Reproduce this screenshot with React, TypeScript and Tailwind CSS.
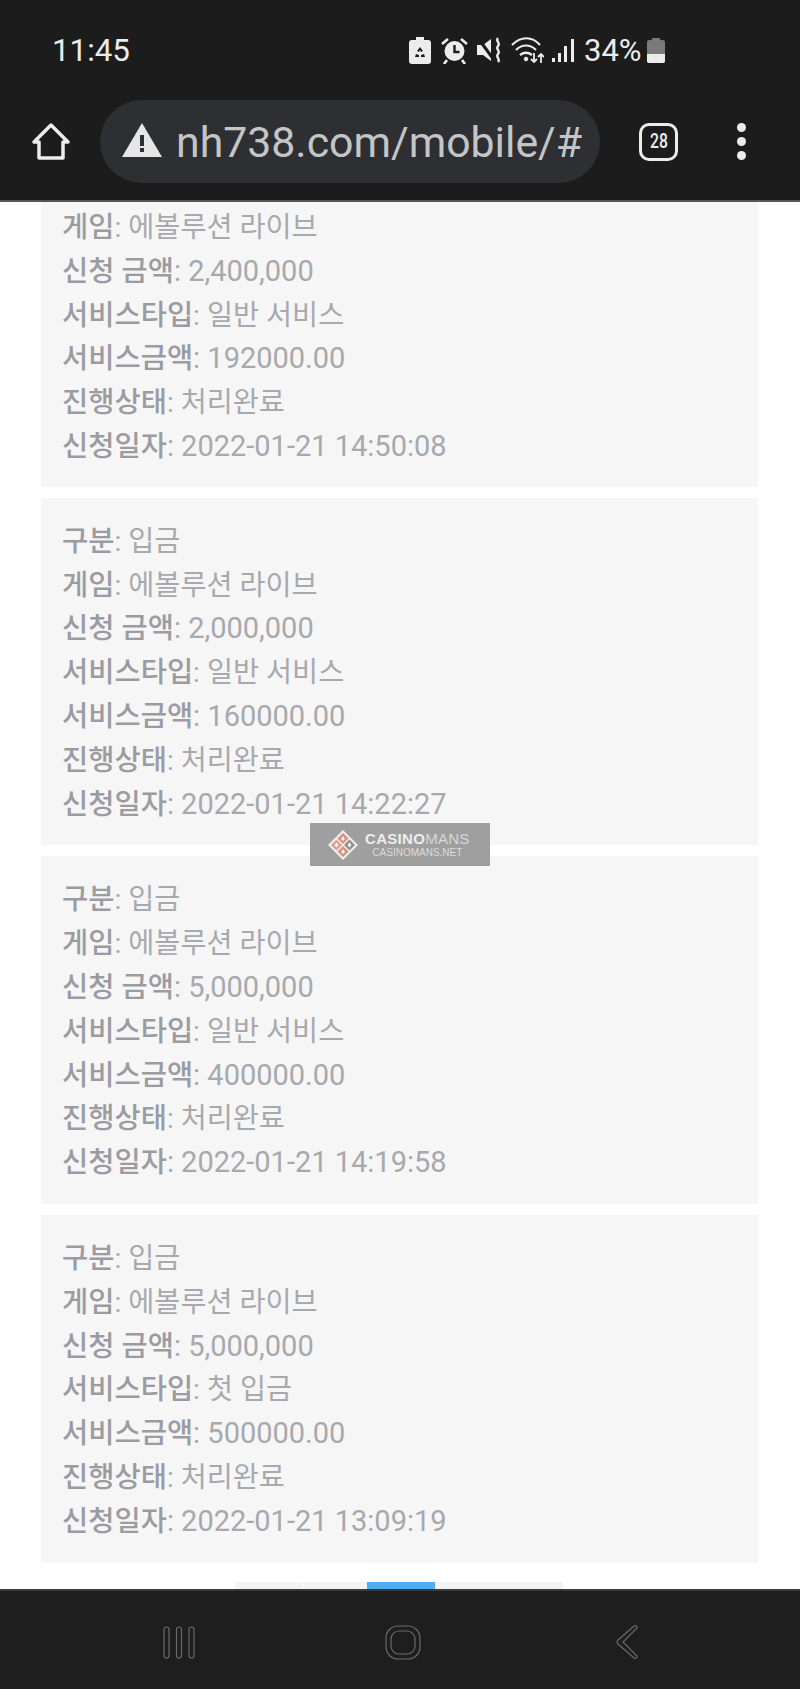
import React from "react";

const cards = [
  { game: "에볼루션 라이브", amount: "2,400,000", type: "일반 서비스", bonus: "192000.00", date: "2022-01-21 14:50:08", clipped: true },
  { game: "에볼루션 라이브", amount: "2,000,000", type: "일반 서비스", bonus: "160000.00", date: "2022-01-21 14:22:27" },
  { game: "에볼루션 라이브", amount: "5,000,000", type: "일반 서비스", bonus: "400000.00", date: "2022-01-21 14:19:58" },
  { game: "에볼루션 라이브", amount: "5,000,000", type: "첫 입금", bonus: "500000.00", date: "2022-01-21 13:09:19" },
];

function Row({ label, value, num }: { label: string; value: string; num?: boolean }) {
  return (
    <div className="h-[43.8px] leading-[43.8px] whitespace-nowrap">
      <span className="font-medium text-[#9a9ca1]">{label}</span>
      <span className={`text-[#a8a9ad] ${num ? "text-[29px]" : "text-[28.3px]"}`}>: {value}</span>
    </div>
  );
}

function StatusIcons() {
  return (
    <div className="flex items-center text-[#ececec]">
      <svg width="22" height="27" viewBox="0 0 22 27" className="ml-[409px]">
        <path d="M7 0h8v3h4a3 3 0 0 1 3 3v18a3 3 0 0 1-3 3H3a3 3 0 0 1-3-3V6a3 3 0 0 1 3-3h4z" fill="currentColor" />
        <path d="M11 10l3 4-2 1-1-2-1 2-2-1zM7 17l-1 3h4v-2zM15 17l1 3h-4v-2z" fill="#1c1c1c" />
      </svg>
      <svg width="29" height="27" viewBox="0 0 29 27" className="ml-[9px]" fill="none">
        <circle cx="14.5" cy="14" r="10" fill="currentColor" />
        <path d="M14.5 8v7h5" stroke="#1c1c1c" strokeWidth="2.4" />
        <path d="M2 7l6-5M27 7l-6-5M7 23l-3 4M22 23l3 4" stroke="currentColor" strokeWidth="2.6" />
      </svg>
      <svg width="27" height="26" viewBox="0 0 27 26" className="ml-[7px]" fill="none">
        <path d="M1 8h6l8-6v22l-8-6H1z" fill="currentColor" />
        <path d="M2 1l16 22" stroke="#1c1c1c" strokeWidth="3" />
        <path d="M22 1c-3 3 3 5 0 8s3 5 0 8 3 5 0 8" stroke="currentColor" strokeWidth="2.4" />
      </svg>
      <svg width="33" height="27" viewBox="0 0 33 27" className="ml-[8px]" fill="none" stroke="currentColor">
        <path d="M1 8c9-9 20-9 28 0" strokeWidth="2.2" />
        <path d="M5 13c6-6 14-6 20 0" strokeWidth="2.2" />
        <path d="M9 18c4-3 8-3 12 0" strokeWidth="2.2" />
        <circle cx="15" cy="22" r="1.8" fill="currentColor" />
        <path d="M23 16v9M20 22l3 3 3-3M30 26v-9M27 20l3-3 3 3" strokeWidth="1.8" />
      </svg>
      <svg width="22" height="25" viewBox="0 0 22 25" className="ml-[8px]" fill="currentColor">
        <rect x="0" y="20" width="3" height="4" />
        <rect x="6" y="15" width="3" height="9" />
        <rect x="12" y="8" width="3" height="16" />
        <rect x="19" y="1" width="3" height="23" />
      </svg>
      <span className="ml-[10px] w-[58px] text-[31px] leading-none whitespace-nowrap">34%</span>
      <svg width="18" height="25" viewBox="0 0 18 25" className="ml-[5px]">
        <path d="M5 0h8v2h3a2 2 0 0 1 2 2v19a2 2 0 0 1-2 2H2a2 2 0 0 1-2-2V4a2 2 0 0 1 2-2h3z" fill="#7a7a7a" />
        <path d="M0 16h18v7a2 2 0 0 1-2 2H2a2 2 0 0 1-2-2z" fill="#ececec" />
      </svg>
    </div>
  );
}

export default function App() {
  return (
    <div className="relative h-[1689px] w-[800px] flex flex-col overflow-hidden bg-white font-['Roboto','Noto_Sans_CJK_KR',sans-serif]">
      <header className="h-[202px] shrink-0 bg-[#1c1c1c] border-b-2 border-[#55565a]">
        <div className="h-[100px] relative flex items-center">
          <span className="absolute left-[52px] top-[34px] text-[31.3px] leading-[34px] text-[#ececec]">11:45</span>
          <StatusIcons />
        </div>
        <div className="flex items-center h-[83px]">
          <svg width="40" height="39" viewBox="0 0 40 39" className="ml-[31px] text-[#ececec]" fill="none" stroke="currentColor" strokeWidth="3.5" strokeLinejoin="round">
            <path d="M20 3L3 20h5v16h24V20h5z" />
          </svg>
          <div className="ml-[29px] w-[500px] h-[83px] rounded-full bg-[#2e2f32] flex items-center">
            <svg width="40" height="34" viewBox="0 0 40 34" className="ml-[22px] mb-[3px]">
              <path d="M20 0l20 34H0z" fill="#e6e6e6" />
              <path d="M18 12h4v11h-4zM18 25h4v4h-4z" fill="#2e2f32" />
            </svg>
            <span className="ml-[14px] mt-[2px] text-[42.8px] leading-none text-[#c4c5c7] whitespace-nowrap">nh738.com/mobile/#</span>
          </div>
          <div className="ml-[39px] w-[39px] h-[38px] rounded-[10px] border-[3.5px] border-[#ececec] flex items-center justify-center text-[#ececec]">
            <span className="text-[21px] font-medium scale-x-75">28</span>
          </div>
          <div className="ml-[59px] flex flex-col gap-[5px]">
            <span className="w-[9px] h-[9px] rounded-full bg-[#ececec]" />
            <span className="w-[9px] h-[9px] rounded-full bg-[#ececec]" />
            <span className="w-[9px] h-[9px] rounded-full bg-[#ececec]" />
          </div>
        </div>
      </header>

      <main className="flex-1 overflow-hidden px-[41px] text-[28.5px]">
        <div className="flex flex-col gap-[11px]">
          {cards.map((c) => (
            <div key={c.date} className={`w-[717px] bg-[#f6f6f7] px-[21px] ${c.clipped ? "pt-[4px] pb-[18px]" : "pt-[22px] pb-[19px]"}`}>
              {!c.clipped && <Row label="구분" value="입금" />}
              <Row label="게임" value={c.game} />
              <Row label="신청 금액" value={c.amount} num />
              <Row label="서비스타입" value={c.type} />
              <Row label="서비스금액" value={c.bonus} num />
              <Row label="진행상태" value="처리완료" />
              <Row label="신청일자" value={c.date} num />
            </div>
          ))}
        </div>
        <div className="mt-[19px] ml-[194px] flex h-[7px] w-[328px]">
          <div className="w-[67px] bg-[#f3f3f4] mr-[1px]" />
          <div className="w-[64px] bg-[#f3f3f4]" />
          <div className="w-[68px] bg-[#50aeee]" />
          <div className="flex-1 bg-[#f3f3f4]" />
        </div>
      </main>

      <nav className="h-[100px] shrink-0 bg-[#1e1e1e] border-t-2 border-[#3a3a3c] flex items-start">
        <svg width="32" height="33" viewBox="0 0 32 33" className="ml-[163px] mt-[35px]" fill="none" stroke="#6a6a6c" strokeWidth="1.2">
          <rect x="1" y="1" width="5" height="31" rx="2.5" />
          <rect x="13.5" y="1" width="5" height="31" rx="2.5" />
          <rect x="26" y="1" width="5" height="31" rx="2.5" />
        </svg>
        <svg width="36" height="35" viewBox="0 0 36 35" className="ml-[190px] mt-[34px]" fill="none" stroke="#6a6a6c" strokeWidth="1.2">
          <rect x="1" y="1" width="34" height="33" rx="12" />
          <rect x="6" y="6" width="24" height="23" rx="8" />
        </svg>
        <svg width="22" height="34" viewBox="0 0 22 34" className="ml-[195px] mt-[34px]" fill="none" stroke="#6a6a6c" strokeWidth="1.2">
          <path d="M18 1a2 2 0 0 1 3 2L7 17l14 14a2 2 0 0 1-3 2L2 19a3 3 0 0 1 0-4z" />
        </svg>
      </nav>

      {/* watermark */}
      <div className="absolute left-[310px] top-[823px] w-[180px] h-[43px] bg-[#9f9f9f] flex items-center">
        <svg width="32" height="32" viewBox="0 0 32 32" className="ml-[17px]">
          <path d="M16 1l15 15-15 15L1 16z" fill="#eeeeee" />
          <path d="M16 4l5.5 5.5L16 15l-5.5-5.5z" fill="#d98f7c" />
          <path d="M28 16l-5.5 5.5L17 16l5.5-5.5z" fill="#8f8f8f" />
          <path d="M16 28l-5.5-5.5L16 17l5.5 5.5z" fill="#d98f7c" />
          <path d="M4 16l5.5-5.5L15 16l-5.5 5.5z" fill="#d9a090" />
          <path d="M16 7l2 3-2 2-2-2zM16 20l2 3-2 2-2-2zM9.5 13.5l2 2.5-2 2.5-2-2.5zM22.5 13.5l2 2.5-2 2.5-2-2.5z" fill="#f4f4f4" />
        </svg>
        <div className="ml-[6px] flex flex-col items-center font-['Liberation_Sans',sans-serif] text-[#ededed]">
          <span className="text-[15px] leading-[17px] tracking-[0.3px] whitespace-nowrap">
            <span className="font-bold">CASINO</span>
            <span className="text-[#d8d8d8]">MANS</span>
          </span>
          <span className="text-[10px] leading-[12px] text-[#dcdcdc] whitespace-nowrap">CASINOMANS.NET</span>
        </div>
      </div>
    </div>
  );
}
